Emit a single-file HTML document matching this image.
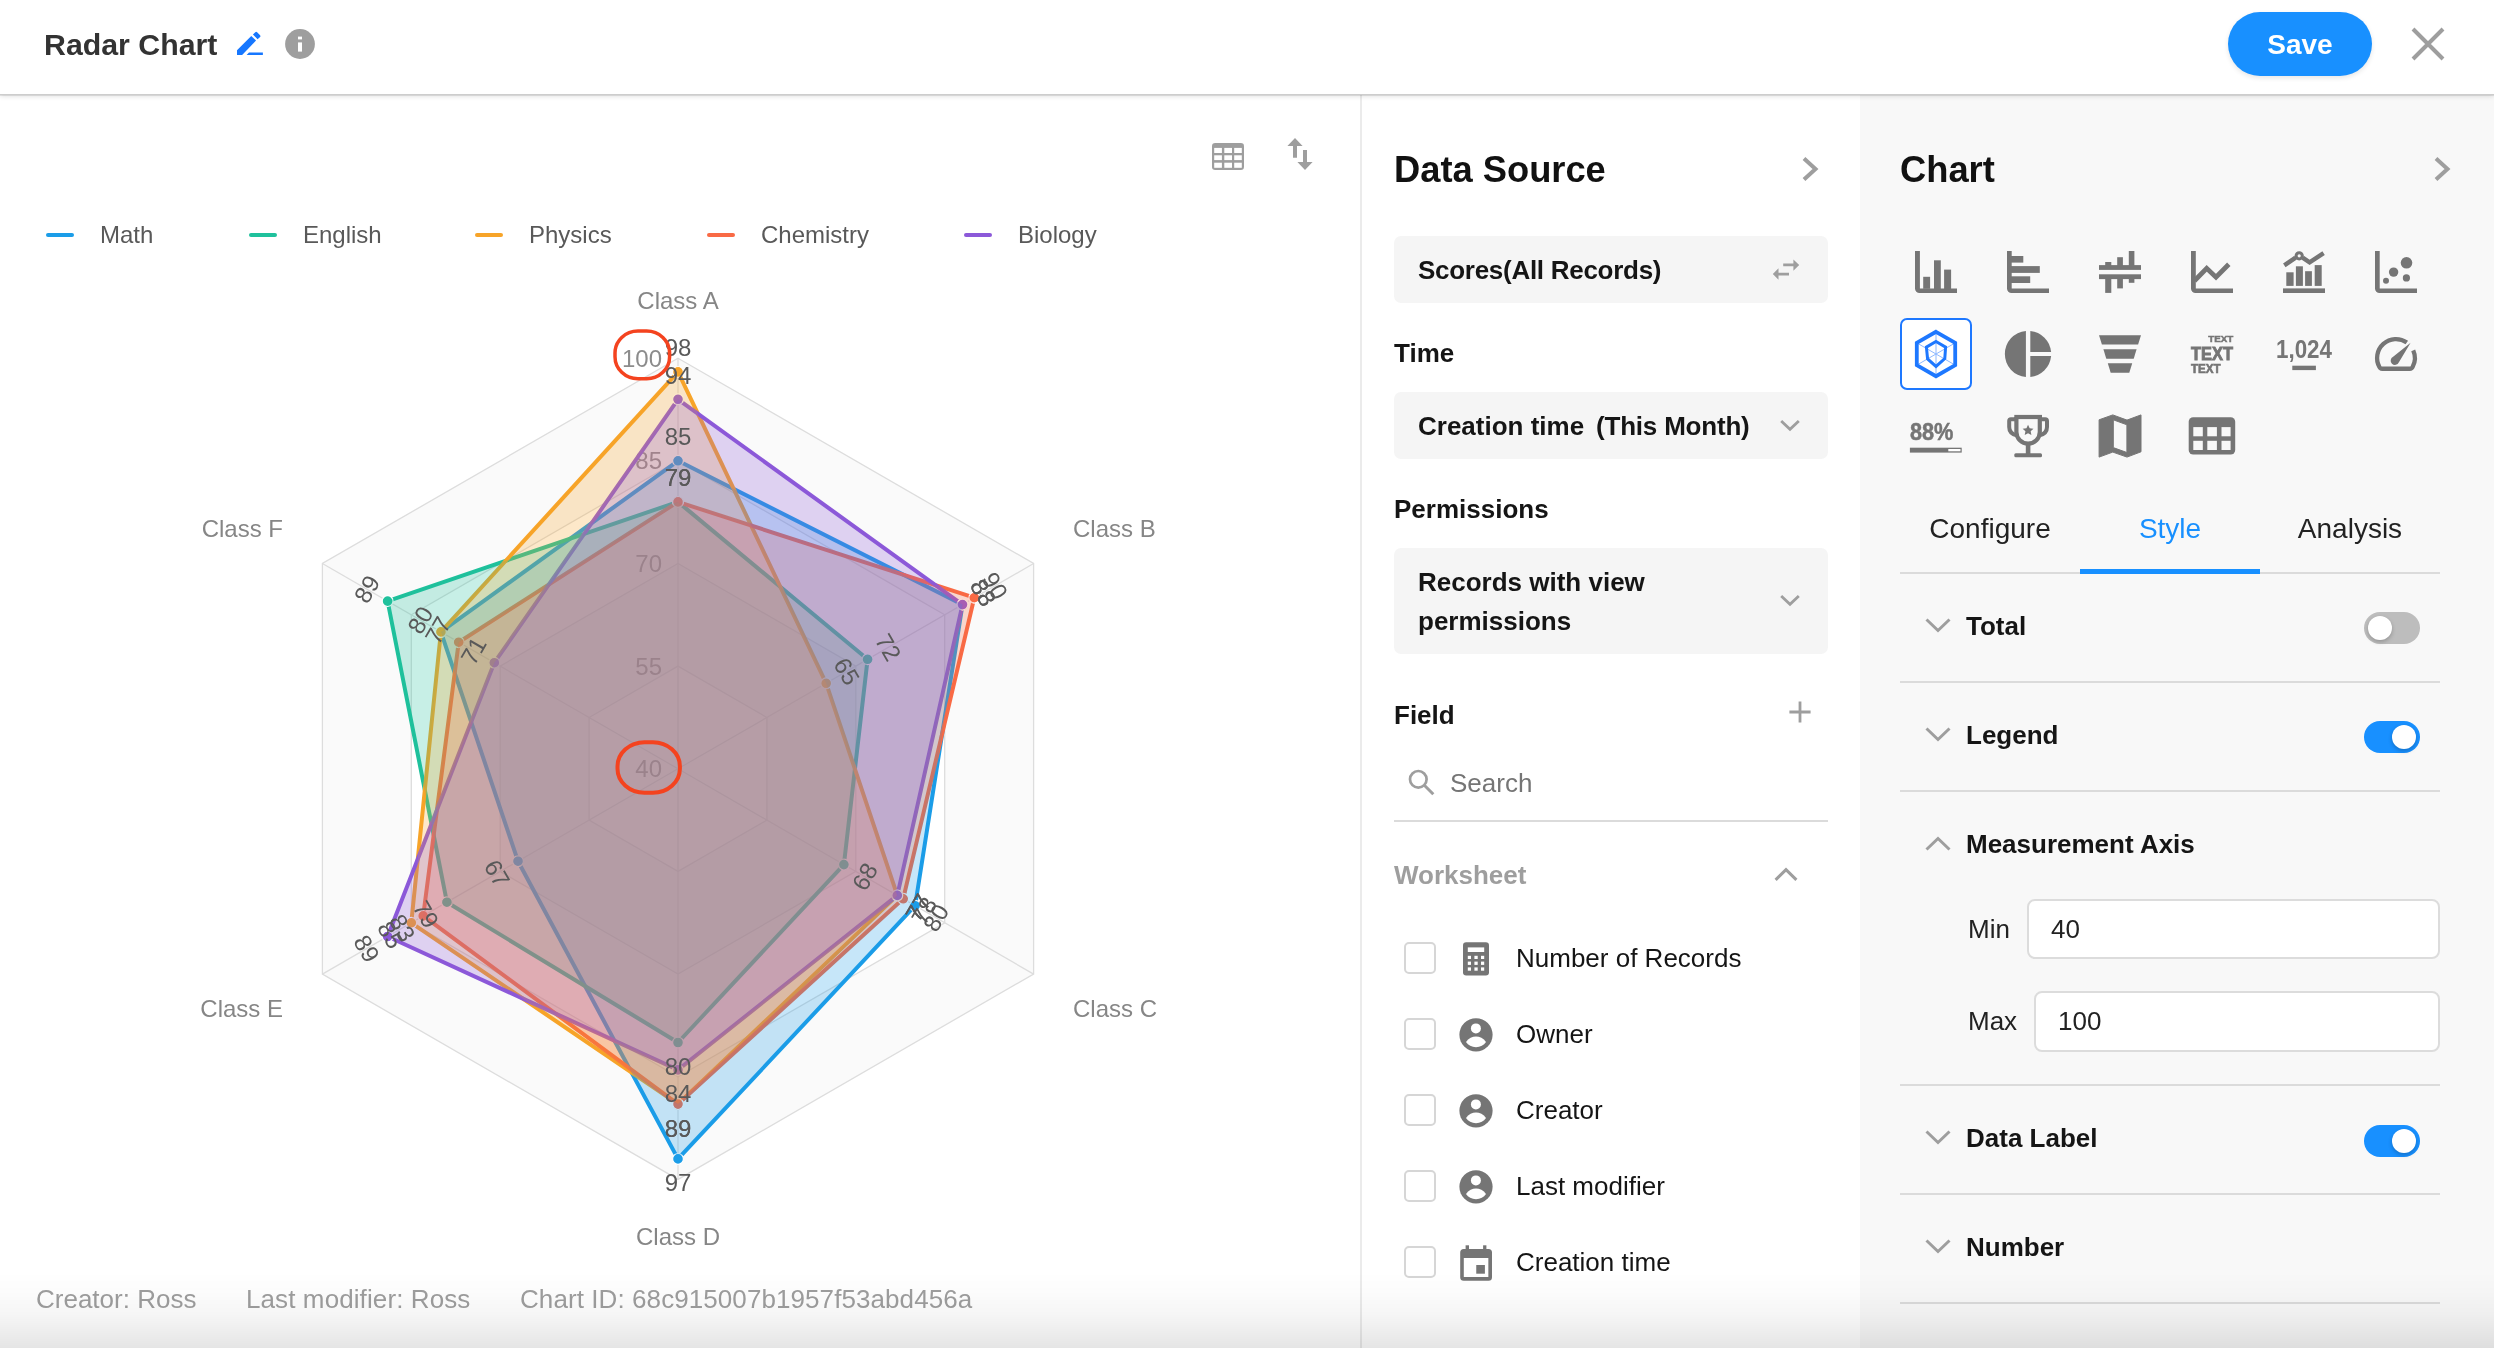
<!DOCTYPE html>
<html lang="en">
<head>
<meta charset="utf-8">
<title>Radar Chart</title>
<style>
*{box-sizing:border-box;margin:0;padding:0}
html,body{width:2494px;height:1348px;overflow:hidden;background:#fff}
body{font-family:"Liberation Sans",sans-serif;color:#151515;position:relative}
.abs{position:absolute}
.t,.tab,#save,svg{will-change:transform}
.t{position:absolute;white-space:nowrap;line-height:1}
.b{font-weight:bold}
/* header */
#header{position:absolute;left:0;top:0;width:2494px;height:94px;background:#fff;box-shadow:0 1px 0 #cdcdcd,0 2px 0 rgba(0,0,0,.09),0 2px 5px rgba(0,0,0,.14);z-index:5}
#title{left:44px;top:30px;font-size:30.3px;font-weight:bold;color:#333}
#save{position:absolute;left:2228px;top:12px;width:144px;height:64px;border-radius:32px;background:#1890ff;color:#fff;font-weight:bold;font-size:28px;text-align:center;line-height:66px;box-shadow:0 2px 5px rgba(0,0,0,.1)}
/* panes */
#left{position:absolute;left:0;top:94px;width:1360px;height:1254px;background:#fff}
#vline{position:absolute;left:1360px;top:94px;width:2px;height:1254px;background:#ebebeb}
#mid{position:absolute;left:1362px;top:94px;width:498px;height:1254px;background:#fff}
#right{position:absolute;left:1860px;top:94px;width:634px;height:1254px;background:#f8f8f8}
#botshade{position:absolute;left:0;top:1272px;width:2494px;height:76px;background:linear-gradient(to bottom,rgba(0,0,0,0),rgba(0,0,0,.012) 25%,rgba(0,0,0,.037) 55%,rgba(0,0,0,.1));z-index:6;pointer-events:none}
.box{position:absolute;left:1394px;width:434px;background:#f5f5f5;border-radius:7px}
.h26{font-size:26px;font-weight:bold}
.hr{position:absolute;height:2px;background:#dbdbdb}
.cb{position:absolute;left:1404px;width:32px;height:32px;border:2px solid #d6d6d6;border-radius:5px;background:#fff}
.fl{left:1516px;font-size:26px;color:#151515}
.tab{position:absolute;top:515px;width:180px;text-align:center;font-size:28px;line-height:1;color:#222}
.sw{position:absolute;left:2364px;width:56px;height:32px;border-radius:16px}
.sw i{position:absolute;top:4px;width:24px;height:24px;border-radius:12px;background:#fff;box-shadow:0 2px 4px rgba(0,0,0,.22)}
.sw.on{background:#1890ff}.sw.on i{left:28px}
.sw.off{background:#bdbdbd}.sw.off i{left:4px}
.inp{position:absolute;height:60px;border:2px solid #dcdcdc;border-radius:8px;background:#fff}
.foot{font-size:26px;color:#9e9e9e;top:1286px}
svg{display:block;overflow:visible}
</style>
</head>
<body>
<div id="left"></div>
<div id="vline"></div>
<div id="mid"></div>
<div id="right"></div>

<!-- header -->
<div id="header">
  <div class="t" id="title">Radar Chart</div>
  <svg class="abs" style="left:236px;top:31px" width="28" height="25" viewBox="0 0 28 25" fill="#1677ff">
    <path d="M1 19.150 L15.260 4.960 L20.070 9.530 L6.160 24 H1 Z"/>
    <path d="M16.950 3.500 L19.300 1.300 a1.300 1.300 0 0 1 1.800 0 L24.100 4.300 a1.300 1.300 0 0 1 0 1.800 L21.600 8.200 Z"/>
    <path d="M10.600 24 L13 21.560 H26.900 V24 Z"/>
  </svg>
  <svg class="abs" style="left:285px;top:28.500px" width="30" height="30" viewBox="0 0 30 30">
    <circle cx="15" cy="15" r="14.900" fill="#9e9e9e"/>
    <rect x="13" y="7.600" width="4" height="2.800" fill="#fff"/>
    <rect x="13" y="13.400" width="4" height="9.200" fill="#fff"/>
  </svg>
  <div id="save">Save</div>
  <svg class="abs" style="left:2411px;top:27px" width="34" height="34" viewBox="0 0 34 34">
    <path d="M2 2 L32 32 M32 2 L2 32" stroke="#9e9e9e" stroke-width="4" fill="none"/>
  </svg>
</div>

<!-- left pane: toolbar icons -->
<svg class="abs" style="left:1212px;top:143px" width="32" height="27" viewBox="0 0 32 27">
  <rect x="0" y="0" width="32" height="27" rx="3.2" fill="#9e9e9e"/>
  <g fill="#fff"><rect x="2.200" y="4.900" width="7.700" height="5.100"/><rect x="12.300" y="4.900" width="7.700" height="5.100"/><rect x="22.200" y="4.900" width="7.600" height="5.100"/>
  <rect x="2.200" y="12.300" width="7.700" height="4.800"/><rect x="12.300" y="12.300" width="7.700" height="4.800"/><rect x="22.200" y="12.300" width="7.600" height="4.800"/>
  <rect x="2.200" y="19.700" width="7.700" height="5.100"/><rect x="12.300" y="19.700" width="7.700" height="5.100"/><rect x="22.200" y="19.700" width="7.600" height="5.100"/></g>
</svg>
<svg class="abs" style="left:1286px;top:137px" width="28" height="34" viewBox="0 0 28 34">
  <path d="M9 1 L16.600 9 H11 V20.800 H7 V9 H1.400 Z" fill="#9e9e9e"/>
  <path d="M19 32.900 L26.600 25 H21 V13.100 H17 V25 H11.400 Z" fill="#9e9e9e"/>
</svg>

<svg class="radar" width="1360" height="1254" viewBox="0 94 1360 1254" style="position:absolute;left:0;top:94px" font-family="Liberation Sans, sans-serif" font-size="24">
<polygon points="678.0,358.2 1033.6,563.5 1033.6,974.1 678.0,1179.4 322.4,974.1 322.4,563.5" fill="#fafafa"/>
<polygon points="678.0,460.8 944.7,614.8 944.7,922.8 678.0,1076.8 411.3,922.8 411.3,614.8" fill="#ffffff"/>
<polygon points="678.0,563.5 855.8,666.1 855.8,871.4 678.0,974.1 500.2,871.5 500.2,666.1" fill="#fafafa"/>
<polygon points="678.0,666.1 766.9,717.5 766.9,820.1 678.0,871.4 589.1,820.1 589.1,717.5" fill="#ffffff"/>
<polygon points="678.0,358.2 1033.6,563.5 1033.6,974.1 678.0,1179.4 322.4,974.1 322.4,563.5" fill="none" stroke="#dddddd" stroke-width="1.3"/>
<polygon points="678.0,460.8 944.7,614.8 944.7,922.8 678.0,1076.8 411.3,922.8 411.3,614.8" fill="none" stroke="#dddddd" stroke-width="1.3"/>
<polygon points="678.0,563.5 855.8,666.1 855.8,871.4 678.0,974.1 500.2,871.5 500.2,666.1" fill="none" stroke="#dddddd" stroke-width="1.3"/>
<polygon points="678.0,666.1 766.9,717.5 766.9,820.1 678.0,871.4 589.1,820.1 589.1,717.5" fill="none" stroke="#dddddd" stroke-width="1.3"/>
<line x1="678" y1="768.8" x2="678.0" y2="358.2" stroke="#dddddd" stroke-width="1.3"/>
<line x1="678" y1="768.8" x2="1033.6" y2="563.5" stroke="#dddddd" stroke-width="1.3"/>
<line x1="678" y1="768.8" x2="1033.6" y2="974.1" stroke="#dddddd" stroke-width="1.3"/>
<line x1="678" y1="768.8" x2="678.0" y2="1179.4" stroke="#dddddd" stroke-width="1.3"/>
<line x1="678" y1="768.8" x2="322.4" y2="974.1" stroke="#dddddd" stroke-width="1.3"/>
<line x1="678" y1="768.8" x2="322.4" y2="563.5" stroke="#dddddd" stroke-width="1.3"/>
<text x="662" y="366.7" text-anchor="end" fill="#8c8c8c">100</text>
<text x="662" y="469.3" text-anchor="end" fill="#8c8c8c">85</text>
<text x="662" y="572.0" text-anchor="end" fill="#8c8c8c">70</text>
<text x="662" y="674.6" text-anchor="end" fill="#8c8c8c">55</text>
<text x="662" y="777.3" text-anchor="end" fill="#8c8c8c">40</text>
<polygon points="678.0,460.8 962.5,604.6 915.1,905.7 678.0,1158.9 518.0,861.2 440.9,631.9" fill="none" stroke="#1b9de8" stroke-width="4" stroke-linejoin="round"/>
<polygon points="678.0,501.9 867.6,659.3 843.9,864.6 678.0,1042.5 446.9,902.2 387.6,601.1" fill="none" stroke="#1fc19c" stroke-width="4" stroke-linejoin="round"/>
<polygon points="678.0,371.9 826.2,683.3 897.3,895.4 678.0,1104.1 411.3,922.8 440.9,631.9" fill="none" stroke="#f7a429" stroke-width="4" stroke-linejoin="round"/>
<polygon points="678.0,501.9 974.3,597.7 903.2,898.8 678.0,1104.1 423.2,915.9 458.7,642.2" fill="none" stroke="#f96a45" stroke-width="4" stroke-linejoin="round"/>
<polygon points="678.0,399.3 962.5,604.6 897.3,895.4 678.0,1069.9 387.6,936.5 494.3,662.7" fill="none" stroke="#8c59d9" stroke-width="4" stroke-linejoin="round"/>
<circle cx="678.0" cy="460.8" r="5.4" fill="#1b9de8" stroke="#fff" stroke-width="1.2"/>
<circle cx="962.5" cy="604.6" r="5.4" fill="#1b9de8" stroke="#fff" stroke-width="1.2"/>
<circle cx="915.1" cy="905.7" r="5.4" fill="#1b9de8" stroke="#fff" stroke-width="1.2"/>
<circle cx="678.0" cy="1158.9" r="5.4" fill="#1b9de8" stroke="#fff" stroke-width="1.2"/>
<circle cx="518.0" cy="861.2" r="5.4" fill="#1b9de8" stroke="#fff" stroke-width="1.2"/>
<circle cx="440.9" cy="631.9" r="5.4" fill="#1b9de8" stroke="#fff" stroke-width="1.2"/>
<circle cx="678.0" cy="501.9" r="5.4" fill="#1fc19c" stroke="#fff" stroke-width="1.2"/>
<circle cx="867.6" cy="659.3" r="5.4" fill="#1fc19c" stroke="#fff" stroke-width="1.2"/>
<circle cx="843.9" cy="864.6" r="5.4" fill="#1fc19c" stroke="#fff" stroke-width="1.2"/>
<circle cx="678.0" cy="1042.5" r="5.4" fill="#1fc19c" stroke="#fff" stroke-width="1.2"/>
<circle cx="446.9" cy="902.2" r="5.4" fill="#1fc19c" stroke="#fff" stroke-width="1.2"/>
<circle cx="387.6" cy="601.1" r="5.4" fill="#1fc19c" stroke="#fff" stroke-width="1.2"/>
<circle cx="678.0" cy="371.9" r="5.4" fill="#f7a429" stroke="#fff" stroke-width="1.2"/>
<circle cx="826.2" cy="683.3" r="5.4" fill="#f7a429" stroke="#fff" stroke-width="1.2"/>
<circle cx="897.3" cy="895.4" r="5.4" fill="#f7a429" stroke="#fff" stroke-width="1.2"/>
<circle cx="678.0" cy="1104.1" r="5.4" fill="#f7a429" stroke="#fff" stroke-width="1.2"/>
<circle cx="411.3" cy="922.8" r="5.4" fill="#f7a429" stroke="#fff" stroke-width="1.2"/>
<circle cx="440.9" cy="631.9" r="5.4" fill="#f7a429" stroke="#fff" stroke-width="1.2"/>
<circle cx="678.0" cy="501.9" r="5.4" fill="#f96a45" stroke="#fff" stroke-width="1.2"/>
<circle cx="974.3" cy="597.7" r="5.4" fill="#f96a45" stroke="#fff" stroke-width="1.2"/>
<circle cx="903.2" cy="898.8" r="5.4" fill="#f96a45" stroke="#fff" stroke-width="1.2"/>
<circle cx="678.0" cy="1104.1" r="5.4" fill="#f96a45" stroke="#fff" stroke-width="1.2"/>
<circle cx="423.2" cy="915.9" r="5.4" fill="#f96a45" stroke="#fff" stroke-width="1.2"/>
<circle cx="458.7" cy="642.2" r="5.4" fill="#f96a45" stroke="#fff" stroke-width="1.2"/>
<circle cx="678.0" cy="399.3" r="5.4" fill="#8c59d9" stroke="#fff" stroke-width="1.2"/>
<circle cx="962.5" cy="604.6" r="5.4" fill="#8c59d9" stroke="#fff" stroke-width="1.2"/>
<circle cx="897.3" cy="895.4" r="5.4" fill="#8c59d9" stroke="#fff" stroke-width="1.2"/>
<circle cx="678.0" cy="1069.9" r="5.4" fill="#8c59d9" stroke="#fff" stroke-width="1.2"/>
<circle cx="387.6" cy="936.5" r="5.4" fill="#8c59d9" stroke="#fff" stroke-width="1.2"/>
<circle cx="494.3" cy="662.7" r="5.4" fill="#8c59d9" stroke="#fff" stroke-width="1.2"/>
<polygon points="678.0,460.8 962.5,604.6 915.1,905.7 678.0,1158.9 518.0,861.2 440.9,631.9" fill="#1b9de8" fill-opacity="0.25" stroke="none"/>
<polygon points="678.0,501.9 867.6,659.3 843.9,864.6 678.0,1042.5 446.9,902.2 387.6,601.1" fill="#1fc19c" fill-opacity="0.25" stroke="none"/>
<polygon points="678.0,371.9 826.2,683.3 897.3,895.4 678.0,1104.1 411.3,922.8 440.9,631.9" fill="#f7a429" fill-opacity="0.25" stroke="none"/>
<polygon points="678.0,501.9 974.3,597.7 903.2,898.8 678.0,1104.1 423.2,915.9 458.7,642.2" fill="#f96a45" fill-opacity="0.25" stroke="none"/>
<polygon points="678.0,399.3 962.5,604.6 897.3,895.4 678.0,1069.9 387.6,936.5 494.3,662.7" fill="#8c59d9" fill-opacity="0.25" stroke="none"/>
<text transform="translate(678.0,436.8) rotate(0)" text-anchor="middle" y="8.5" fill="#595959">85</text>
<text transform="translate(983.3,592.6) rotate(60)" text-anchor="middle" y="8.5" fill="#595959">88</text>
<text transform="translate(935.8,917.7) rotate(-60)" text-anchor="middle" y="8.5" fill="#595959">80</text>
<text transform="translate(678.0,1182.9) rotate(0)" text-anchor="middle" y="8.5" fill="#595959">97</text>
<text transform="translate(497.2,873.2) rotate(60)" text-anchor="middle" y="8.5" fill="#595959">67</text>
<text transform="translate(678.0,477.9) rotate(0)" text-anchor="middle" y="8.5" fill="#595959">79</text>
<text transform="translate(888.4,647.3) rotate(60)" text-anchor="middle" y="8.5" fill="#595959">72</text>
<text transform="translate(864.7,876.6) rotate(-60)" text-anchor="middle" y="8.5" fill="#595959">68</text>
<text transform="translate(678.0,1066.5) rotate(0)" text-anchor="middle" y="8.5" fill="#595959">80</text>
<text transform="translate(426.1,914.2) rotate(60)" text-anchor="middle" y="8.5" fill="#595959">79</text>
<text transform="translate(366.8,589.1) rotate(-60)" text-anchor="middle" y="8.5" fill="#595959">89</text>
<text transform="translate(678.0,347.9) rotate(0)" text-anchor="middle" y="8.5" fill="#595959">98</text>
<text transform="translate(846.9,671.3) rotate(60)" text-anchor="middle" y="8.5" fill="#595959">65</text>
<text transform="translate(918.1,907.4) rotate(-60)" text-anchor="middle" y="8.5" fill="#595959">77</text>
<text transform="translate(678.0,1128.1) rotate(0)" text-anchor="middle" y="8.5" fill="#595959">89</text>
<text transform="translate(390.5,934.8) rotate(60)" text-anchor="middle" y="8.5" fill="#595959">85</text>
<text transform="translate(420.2,619.9) rotate(-60)" text-anchor="middle" y="8.5" fill="#595959">80</text>
<text transform="translate(678.0,477.9) rotate(0)" text-anchor="middle" y="8.5" fill="#595959">79</text>
<text transform="translate(995.1,585.7) rotate(60)" text-anchor="middle" y="8.5" fill="#595959">90</text>
<text transform="translate(924.0,910.8) rotate(-60)" text-anchor="middle" y="8.5" fill="#595959">78</text>
<text transform="translate(678.0,1128.1) rotate(0)" text-anchor="middle" y="8.5" fill="#595959">89</text>
<text transform="translate(402.4,927.9) rotate(60)" text-anchor="middle" y="8.5" fill="#595959">83</text>
<text transform="translate(437.9,630.2) rotate(-60)" text-anchor="middle" y="8.5" fill="#595959">77</text>
<text transform="translate(678.0,375.3) rotate(0)" text-anchor="middle" y="8.5" fill="#595959">94</text>
<text transform="translate(983.3,592.6) rotate(60)" text-anchor="middle" y="8.5" fill="#595959">88</text>
<text transform="translate(918.1,907.4) rotate(-60)" text-anchor="middle" y="8.5" fill="#595959">77</text>
<text transform="translate(678.0,1093.9) rotate(0)" text-anchor="middle" y="8.5" fill="#595959">84</text>
<text transform="translate(366.8,948.5) rotate(60)" text-anchor="middle" y="8.5" fill="#595959">89</text>
<text transform="translate(473.5,650.7) rotate(-60)" text-anchor="middle" y="8.5" fill="#595959">71</text>
<g fill="#868686">
<text x="678" y="309" text-anchor="middle">Class A</text>
<text x="1073" y="537">Class B</text>
<text x="1073" y="1017">Class C</text>
<text x="678" y="1245" text-anchor="middle">Class D</text>
<text x="283" y="1017" text-anchor="end">Class E</text>
<text x="283" y="537" text-anchor="end">Class F</text>
</g>
<rect x="615" y="331" width="54.6" height="47.8" rx="23" ry="22" fill="none" stroke="#f4431f" stroke-width="3.5"/>
<rect x="617.5" y="742.2" width="62.4" height="50.5" rx="27" ry="24" fill="none" stroke="#f4431f" stroke-width="4"/>
<line x1="48" y1="235" x2="72" y2="235" stroke="#1b9de8" stroke-width="4" stroke-linecap="round"/>
<text x="100" y="242.6" fill="#595959">Math</text>
<line x1="251" y1="235" x2="275" y2="235" stroke="#1fc19c" stroke-width="4" stroke-linecap="round"/>
<text x="303" y="242.6" fill="#595959">English</text>
<line x1="477" y1="235" x2="501" y2="235" stroke="#f7a429" stroke-width="4" stroke-linecap="round"/>
<text x="529" y="242.6" fill="#595959">Physics</text>
<line x1="709" y1="235" x2="733" y2="235" stroke="#f96a45" stroke-width="4" stroke-linecap="round"/>
<text x="761" y="242.6" fill="#595959">Chemistry</text>
<line x1="966" y1="235" x2="990" y2="235" stroke="#8c59d9" stroke-width="4" stroke-linecap="round"/>
<text x="1018" y="242.6" fill="#595959">Biology</text>
</svg>

<div class="t foot" style="left:36px">Creator: Ross</div>
<div class="t foot" style="left:246px;letter-spacing:.1px">Last modifier: Ross</div>
<div class="t foot" style="left:520px;letter-spacing:.08px">Chart ID: 68c915007b1957f53abd456a</div>

<!-- middle pane: data source -->
<div class="t b" style="left:1394px;top:152px;font-size:36.3px;color:#111">Data Source</div>
<svg class="abs" style="left:1801px;top:156px" width="18" height="26" viewBox="0 0 18 26"><path d="M3 2.5 L14.5 13 L3 23.5" stroke="#9e9e9e" stroke-width="4" fill="none"/></svg>

<div class="box" style="top:236px;height:66.5px"></div>
<div class="t h26" style="left:1418px;top:257px;letter-spacing:-.28px">Scores(All Records)</div>
<svg class="abs" style="left:1772px;top:258px" width="28" height="23" viewBox="0 0 28 23" fill="#9e9e9e">
  <path d="M11.200 5.600 H21.400 V1.400 L27.200 6.950 L21.400 12.700 V8.300 H11.200 Z"/>
  <path d="M17 14.700 H6.500 V10.300 L0.800 16.050 L6.500 21.800 V17.400 H17 Z"/>
</svg>

<div class="t h26" style="left:1394px;top:340px">Time</div>
<div class="box" style="top:392px;height:66.5px"></div>
<div class="t h26" style="left:1418px;top:413px">Creation time</div>
<div class="t h26" style="left:1596px;top:413px;letter-spacing:-.2px">(This Month)</div>
<svg class="abs" style="left:1780px;top:419px" width="20" height="13" viewBox="0 0 20 13"><path d="M1.200 1.900 L10 10.300 L18.800 1.900" stroke="#9e9e9e" stroke-width="2.800" fill="none"/></svg>

<div class="t h26" style="left:1394px;top:496px">Permissions</div>
<div class="box" style="top:548px;height:106px"></div>
<div class="t h26" style="left:1418px;top:569px">Records with view</div>
<div class="t h26" style="left:1418px;top:608px">permissions</div>
<svg class="abs" style="left:1780px;top:594px" width="20" height="13" viewBox="0 0 20 13"><path d="M1.200 1.900 L10 10.300 L18.800 1.900" stroke="#9e9e9e" stroke-width="2.800" fill="none"/></svg>

<div class="t h26" style="left:1394px;top:702px">Field</div>
<svg class="abs" style="left:1789px;top:701px" width="22" height="22" viewBox="0 0 22 22"><path d="M11 .400 V21.600 M.400 11 H21.600" stroke="#9e9e9e" stroke-width="2.800" fill="none"/></svg>
<svg class="abs" style="left:1408px;top:769px" width="28" height="27" viewBox="0 0 28 27">
  <circle cx="10.300" cy="10.300" r="8.300" stroke="#9e9e9e" stroke-width="2.700" fill="none"/>
  <path d="M16.300 16.300 L25.300 25.300" stroke="#9e9e9e" stroke-width="3" fill="none"/>
</svg>
<div class="t" style="left:1450px;top:770px;font-size:26px;color:#757575">Search</div>
<div class="hr" style="left:1394px;top:820px;width:434px"></div>

<div class="t h26" style="left:1394px;top:862px;color:#9e9e9e">Worksheet</div>
<svg class="abs" style="left:1772px;top:866px" width="28" height="17" viewBox="0 0 28 17"><path d="M3.600 13.900 L14 3.600 L24.400 13.900" stroke="#9e9e9e" stroke-width="3" fill="none"/></svg>

<div class="cb" style="top:942px"></div>
<div class="cb" style="top:1018px"></div>
<div class="cb" style="top:1094px"></div>
<div class="cb" style="top:1170px"></div>
<div class="cb" style="top:1246px"></div>
<!-- calculator -->
<svg class="abs" style="left:1463px;top:942px" width="26" height="34" viewBox="0 0 26 34">
  <rect x="0" y=".200" width="26" height="33.300" rx="3.200" fill="#757575"/>
  <rect x="4.800" y="5.400" width="16.400" height="4.600" fill="#fff"/>
  <g fill="#fff">
    <rect x="4.800" y="13.800" width="3.200" height="3.200"/><rect x="11.400" y="13.800" width="3.300" height="3.200"/><rect x="18" y="13.800" width="3.200" height="3.200"/>
    <rect x="4.800" y="19.600" width="3.200" height="3.300"/><rect x="11.400" y="19.600" width="3.300" height="3.300"/><rect x="18" y="19.600" width="3.200" height="3.300"/>
    <rect x="4.800" y="25.400" width="3.200" height="3.300"/><rect x="11.400" y="25.400" width="3.300" height="3.300"/><rect x="18" y="25.400" width="3.200" height="3.300"/>
  </g>
</svg>
<!-- person icons -->
<svg class="abs" style="left:1459px;top:1018px" width="34" height="34" viewBox="0 0 34 34"><circle cx="17" cy="16.800" r="16.600" fill="#757575"/><circle cx="16.900" cy="10.400" r="5" fill="#fff"/><path d="M7 24 C9.500 20.300 13.500 18.600 17 18.600 C20.500 18.600 24.500 20.300 27 24 C24.800 27.200 21.300 29.200 17 29.200 C12.700 29.200 9.200 27.200 7 24 Z" fill="#fff"/></svg>
<svg class="abs" style="left:1459px;top:1094px" width="34" height="34" viewBox="0 0 34 34"><circle cx="17" cy="16.800" r="16.600" fill="#757575"/><circle cx="16.900" cy="10.400" r="5" fill="#fff"/><path d="M7 24 C9.500 20.300 13.500 18.600 17 18.600 C20.500 18.600 24.500 20.300 27 24 C24.800 27.200 21.300 29.200 17 29.200 C12.700 29.200 9.200 27.200 7 24 Z" fill="#fff"/></svg>
<svg class="abs" style="left:1459px;top:1170px" width="34" height="34" viewBox="0 0 34 34"><circle cx="17" cy="16.800" r="16.600" fill="#757575"/><circle cx="16.900" cy="10.400" r="5" fill="#fff"/><path d="M7 24 C9.500 20.300 13.500 18.600 17 18.600 C20.500 18.600 24.500 20.300 27 24 C24.800 27.200 21.300 29.200 17 29.200 C12.700 29.200 9.200 27.200 7 24 Z" fill="#fff"/></svg>
<!-- calendar -->
<svg class="abs" style="left:1460px;top:1245px" width="32" height="36" viewBox="0 0 32 36">
  <path d="M3.700 3.950 H28.500 a3.500 3.500 0 0 1 3.500 3.500 V32.300 a3.500 3.500 0 0 1 -3.500 3.500 H3.700 a3.500 3.500 0 0 1 -3.500 -3.500 V7.450 a3.500 3.500 0 0 1 3.500 -3.500 Z M3.800 13 V32.100 H28.350 V13 Z" fill="#757575" fill-rule="evenodd"/>
  <rect x="5.600" y=".300" width="3.400" height="5" fill="#757575"/><rect x="23.100" y=".300" width="3.300" height="5" fill="#757575"/>
  <rect x="16.250" y="20" width="8.650" height="8.700" fill="#757575"/>
</svg>
<div class="t fl" style="top:945px">Number of Records</div>
<div class="t fl" style="top:1021px">Owner</div>
<div class="t fl" style="top:1097px">Creator</div>
<div class="t fl" style="top:1173px">Last modifier</div>
<div class="t fl" style="top:1249px">Creation time</div>

<!-- right pane: chart -->
<div class="t b" style="left:1900px;top:152px;font-size:36.3px;color:#111">Chart</div>
<svg class="abs" style="left:2433px;top:156px" width="18" height="26" viewBox="0 0 18 26"><path d="M3 2.5 L14.5 13 L3 23.5" stroke="#9e9e9e" stroke-width="4" fill="none"/></svg>
<div class="abs" style="left:1900px;top:318px;width:72px;height:72px;border:2px solid #1e78ff;border-radius:7px;background:#fff"></div>
<!-- chart type icons -->
<svg class="abs" style="left:1915px;top:251px" width="42" height="42" viewBox="0 0 42 42" fill="#757575">
  <path d="M0 0 H4.900 V37.400 H42 V42 H4.500 A4.500 4.500 0 0 1 0 37.500 Z"/>
  <rect x="8.200" y="25.800" width="6.900" height="12"/><rect x="19" y="9.300" width="6.800" height="29"/><rect x="29.100" y="18.600" width="7" height="20"/>
</svg>
<svg class="abs" style="left:2007px;top:251px" width="42" height="42" viewBox="0 0 42 42" fill="#757575">
  <path d="M0 0 H4.700 V37.400 H42 V42 H4.500 A4.500 4.500 0 0 1 0 37.500 Z"/>
  <rect x="4" y="5" width="12.300" height="6.600"/><rect x="4" y="15.100" width="28.800" height="6.800"/><rect x="4" y="25.300" width="19.200" height="6.700"/>
</svg>
<svg class="abs" style="left:2099px;top:251px" width="42" height="42" viewBox="0 0 42 42" fill="#757575">
  <rect x="0" y="14.100" width="42" height="4.800"/><rect x="0" y="23.300" width="42" height="4.800"/>
  <rect x="6.200" y="11" width="6.100" height="4"/><rect x="18.200" y="6.200" width="5.700" height="9"/><rect x="29.800" y="0" width="5.600" height="15"/>
  <rect x="6.200" y="27" width="6.100" height="14.900"/><rect x="18.200" y="27" width="5.700" height="10.400"/><rect x="29.800" y="27" width="5.600" height="4.800"/>
</svg>
<svg class="abs" style="left:2191px;top:251px" width="42" height="42" viewBox="0 0 42 42" fill="#757575">
  <path d="M0 0 H4.800 V37.400 H42 V42 H4.500 A4.500 4.500 0 0 1 0 37.500 Z"/>
  <path d="M3.500 29.800 L15.700 17.300 L25 26.200 L37.800 13.300" stroke="#757575" stroke-width="4.800" fill="none"/>
</svg>
<svg class="abs" style="left:2283px;top:251px" width="42" height="42" viewBox="0 0 42 42" fill="#757575">
  <rect x="0" y="37.400" width="42" height="4.600"/>
  <rect x="3.300" y="21.300" width="7.300" height="13.600"/><rect x="12.900" y="15.300" width="7" height="19.600"/><rect x="22.100" y="20.200" width="6.800" height="14.700"/><rect x="31.700" y="14.100" width="7" height="20.800"/>
  <path d="M1.300 14.400 L12.600 6.600 M19.600 6.600 L26.600 11.300 L40.600 2.200" stroke="#757575" stroke-width="4.400" fill="none"/>
  <circle cx="16.200" cy="4.800" r="3.100" stroke="#757575" stroke-width="3" fill="none"/>
</svg>
<svg class="abs" style="left:2375px;top:251px" width="42" height="42" viewBox="0 0 42 42" fill="#757575">
  <path d="M0 0 H4.700 V37.400 H42 V42 H4.500 A4.500 4.500 0 0 1 0 37.500 Z"/>
  <circle cx="31.500" cy="11.800" r="5.800"/><circle cx="18.600" cy="21.100" r="4.700"/><circle cx="11" cy="29.800" r="3"/><circle cx="31.400" cy="26.900" r="3.600"/>
</svg>
<!-- row 2 -->
<svg class="abs" style="left:1912px;top:330px" width="48" height="48" viewBox="-24 -24 48 48">
  <g stroke="#8db8ff" stroke-width="1" fill="none"><path d="M0 -22 V22 M-19 -11 L19 11 M-19 11 L19 -11"/></g>
  <polygon points="0,-22.200 19.200,-11.100 19.200,11.100 0,22.200 -19.200,11.100 -19.200,-11.100" fill="none" stroke="#1e78ff" stroke-width="3.800" stroke-linejoin="miter"/>
  <polygon points="0,-12.500 9.600,-6.900 8.800,4.600 0,12.400 -8.400,5 -9.600,-6.900" fill="none" stroke="#1e78ff" stroke-width="3" stroke-linejoin="miter"/>
</svg>
<svg class="abs" style="left:2004px;top:330px" width="48" height="48" viewBox="-24 -24 48 48" fill="#757575">
  <path d="M-2.100 -23.100 A23.200 23.200 0 0 0 -2.100 23.100 Z"/>
  <path d="M2.300 -23.100 A23.200 23.200 0 0 1 23.100 -2.100 H2.300 Z"/>
  <path d="M2.300 23.100 A23.200 23.200 0 0 0 23.100 2.100 H2.300 Z"/>
</svg>
<svg class="abs" style="left:2096px;top:330px" width="48" height="48" viewBox="-24 -24 48 48" fill="#757575">
  <polygon points="-21,-18.700 21,-18.700 18.100,-9.400 -18.100,-9.400"/>
  <polygon points="-16.600,-4.700 16.600,-4.700 13.700,4.700 -13.700,4.700"/>
  <polygon points="-12.200,9.200 12.200,9.200 9.300,18.700 -9.300,18.700"/>
</svg>
<svg class="abs" style="left:2188px;top:330px" width="48" height="48" viewBox="0 0 48 48" fill="#757575" font-family="Liberation Sans, sans-serif" font-weight="bold">
  <text x="45.200" y="12.300" font-size="9.400" text-anchor="end" textLength="25" lengthAdjust="spacingAndGlyphs" stroke="#757575" stroke-width=".5">TEXT</text>
  <text x="3" y="29.600" font-size="18" textLength="42" lengthAdjust="spacingAndGlyphs" stroke="#757575" stroke-width=".9">TEXT</text>
  <text x="3" y="42.700" font-size="12" textLength="29.700" lengthAdjust="spacingAndGlyphs" stroke="#757575" stroke-width=".6">TEXT</text>
</svg>
<svg class="abs" style="left:2274px;top:330px" width="60" height="48" viewBox="0 0 60 48" fill="#757575" font-family="Liberation Sans, sans-serif" font-weight="bold">
  <text x="2" y="28.100" font-size="25.500" textLength="56" lengthAdjust="spacingAndGlyphs">1,024</text>
  <rect x="18.300" y="35.700" width="23.600" height="4.400"/>
</svg>
<svg class="abs" style="left:2372px;top:334px" width="48" height="48" viewBox="-24 -24 48 48">
  <path d="M10.810 -15.440 A18.850 18.850 0 0 0 -16.600 9 Q-15.900 10.750 -13.800 10.750 H13.800 Q15.900 10.750 16.600 9 A18.850 18.850 0 0 0 17.220 -7.670" stroke="#757575" stroke-width="4.300" fill="none"/>
  <path d="M14.600 -15.200 L2.900 4.300 A4.300 4.300 0 1 1 -2.900 -1.300 Z" fill="#757575"/>
</svg>
<!-- row 3 -->
<svg class="abs" style="left:1908px;top:412px" width="56" height="48" viewBox="0 0 56 48" fill="#757575" font-family="Liberation Sans, sans-serif" font-weight="bold">
  <text x="1.900" y="28.400" font-size="23.600" textLength="43.500" lengthAdjust="spacingAndGlyphs" stroke="#757575" stroke-width=".5">88%</text>
  <rect x="1.900" y="35.700" width="51.800" height="4.900"/>
  <rect x="40.300" y="37" width="12.200" height="2.300" fill="#fff"/>
</svg>
<svg class="abs" style="left:2004px;top:412px" width="48" height="48" viewBox="0 0 48 48">
  <path d="M12.400 5 V20 A11.700 11.700 0 0 0 35.800 20 V5" stroke="#757575" stroke-width="4.200" fill="none"/>
  <rect x="10.300" y="2.900" width="27.700" height="4.200" fill="#757575"/>
  <path d="M11 7.200 H7 Q5.200 7.200 5.200 9 V15 Q5.200 21.500 12.500 23.300 M37.200 7.200 H41.200 Q43 7.200 43 9 V15 Q43 21.500 35.700 23.300" stroke="#757575" stroke-width="4" fill="none"/>
  <rect x="21.800" y="33" width="4.600" height="9" fill="#757575"/>
  <rect x="10.300" y="41.300" width="27.700" height="3.900" rx="1.500" fill="#757575"/>
  <polygon points="24.05,12.80 25.67,16.28 29.47,16.74 26.67,19.35 27.40,23.11 24.05,21.25 20.70,23.11 21.43,19.35 18.63,16.74 22.43,16.28" fill="#757575"/>
</svg>
<svg class="abs" style="left:2096px;top:412px" width="48" height="48" viewBox="0 0 48 48">
  <path d="M3.100 7.800 L16.800 2.900 L31 8.100 L45 2.900 V39.800 L31 45.100 L16.800 40.100 L3.100 45.100 Z M17.300 7.800 V35.600 L30.900 40.500 V12.800 Z" fill="#757575" fill-rule="evenodd" stroke="#757575" stroke-width="1" stroke-linejoin="round"/>
</svg>
<svg class="abs" style="left:2188px;top:412px" width="48" height="48" viewBox="0 0 48 48">
  <rect x=".7" y="5.200" width="46.500" height="37.300" rx="4.500" fill="#757575"/>
  <g fill="#f8f8f8"><rect x="5.300" y="15.100" width="9.500" height="9.200"/><rect x="19.300" y="15.100" width="9.600" height="9.200"/><rect x="33.500" y="15.100" width="9.100" height="9.200"/>
  <rect x="5.300" y="28.800" width="9.500" height="9.200"/><rect x="19.300" y="28.800" width="9.600" height="9.200"/><rect x="33.500" y="28.800" width="9.100" height="9.200"/></g>
</svg>


<div class="tab" style="left:1900px">Configure</div>
<div class="tab" style="left:2080px;color:#1890ff">Style</div>
<div class="tab" style="left:2260px">Analysis</div>
<div class="hr" style="left:1900px;top:572px;width:540px"></div>
<div class="abs" style="left:2080px;top:569px;width:180px;height:5px;background:#1890ff"></div>

<svg class="abs" style="left:1925px;top:618px" width="26" height="15" viewBox="0 0 26 15"><path d="M1.500 1.500 L13 12.500 L24.500 1.500" stroke="#9e9e9e" stroke-width="3" fill="none"/></svg>
<div class="t h26" style="left:1966px;top:613px">Total</div>
<div class="sw off" style="top:612px"><i></i></div>
<div class="hr" style="left:1900px;top:681px;width:540px"></div>

<svg class="abs" style="left:1925px;top:727px" width="26" height="15" viewBox="0 0 26 15"><path d="M1.500 1.500 L13 12.500 L24.500 1.500" stroke="#9e9e9e" stroke-width="3" fill="none"/></svg>
<div class="t h26" style="left:1966px;top:722px">Legend</div>
<div class="sw on" style="top:721px"><i></i></div>
<div class="hr" style="left:1900px;top:790px;width:540px"></div>

<svg class="abs" style="left:1925px;top:836px" width="26" height="15" viewBox="0 0 26 15"><path d="M1.500 13.500 L13 2.500 L24.500 13.500" stroke="#9e9e9e" stroke-width="3" fill="none"/></svg>
<div class="t h26" style="left:1966px;top:831px">Measurement Axis</div>

<div class="t" style="left:1968px;top:916px;font-size:26px;color:#222">Min</div>
<div class="inp" style="left:2027px;top:899px;width:413px"></div>
<div class="t" style="left:2051px;top:916px;font-size:26px;color:#222">40</div>
<div class="t" style="left:1968px;top:1008px;font-size:26px;color:#222">Max</div>
<div class="inp" style="left:2034px;top:991px;width:406px;height:61px"></div>
<div class="t" style="left:2058px;top:1008px;font-size:26px;color:#222">100</div>
<div class="hr" style="left:1900px;top:1084px;width:540px"></div>

<svg class="abs" style="left:1925px;top:1130px" width="26" height="15" viewBox="0 0 26 15"><path d="M1.500 1.500 L13 12.500 L24.500 1.500" stroke="#9e9e9e" stroke-width="3" fill="none"/></svg>
<div class="t h26" style="left:1966px;top:1125px">Data Label</div>
<div class="sw on" style="top:1125px"><i></i></div>
<div class="hr" style="left:1900px;top:1193px;width:540px"></div>

<svg class="abs" style="left:1925px;top:1239px" width="26" height="15" viewBox="0 0 26 15"><path d="M1.500 1.500 L13 12.500 L24.500 1.500" stroke="#9e9e9e" stroke-width="3" fill="none"/></svg>
<div class="t h26" style="left:1966px;top:1234px">Number</div>
<div class="hr" style="left:1900px;top:1302px;width:540px"></div>

<div id="botshade"></div>
</body>
</html>
